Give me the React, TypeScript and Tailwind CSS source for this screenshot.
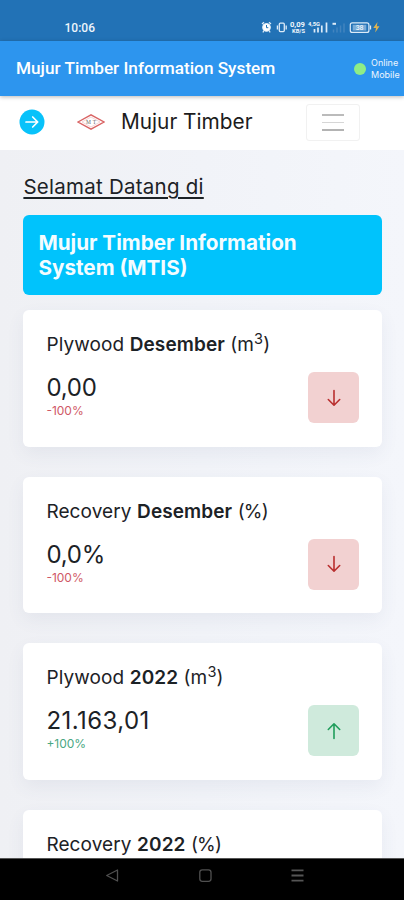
type Stat = {
  id: string;
  label: string;
  period: string;
  unit: "m3" | "%";
  value?: string;
  change?: string;
  trend: "up" | "down";
};

const stats: Stat[] = [
  { id: "plywood-month", label: "Plywood", period: "Desember", unit: "m3", value: "0,00", change: "-100%", trend: "down" },
  { id: "recovery-month", label: "Recovery", period: "Desember", unit: "%", value: "0,0%", change: "-100%", trend: "down" },
  { id: "plywood-year", label: "Plywood", period: "2022", unit: "m3", value: "21.163,01", change: "+100%", trend: "up" },
  { id: "recovery-year", label: "Recovery", period: "2022", unit: "%", trend: "up" },
];

function StatusIcons() {
  return (
    <svg
      width="122"
      height="14"
      viewBox="0 0 122 14"
      className="mt-[20px]"
      fill="none"
      stroke="#dcebf8"
    >
      {/* Alarm */}
      <circle cx="6.5" cy="7.4" r="3.9" fill="#fff" stroke="#e8f2fa" />
      <path d="M2 3.9l2-1.7M11 3.9L9 2.2M3.8 11.2l-1 1.2M9.2 11.2l1 1.2" strokeWidth="1.3" />
      <path d="M6.5 5v2.7h1.8" stroke="#2272b6" strokeWidth="1" />
      {/* Vibrate */}
      <rect x="19.3" y="3.2" width="5" height="8.4" rx="1" strokeWidth="1.3" />
      <path d="M17.4 5.4v4M26.2 5.4v4" strokeWidth="1.3" />
      {/* Network speed */}
      <g fill="#f3f8fd" stroke="none" className="font-['Roboto',sans-serif] font-bold">
        <text x="30" y="6.8" fontSize="6.5" textLength="15" lengthAdjust="spacingAndGlyphs">
          0,09
        </text>
        <text x="32" y="12.6" fontSize="5.8" textLength="13" lengthAdjust="spacingAndGlyphs">
          KB/S
        </text>
        <text x="48" y="6.2" fontSize="5" textLength="12" lengthAdjust="spacingAndGlyphs">
          4,5G
        </text>
      </g>
      {/* Signal bars */}
      <path d="M54.5 12.5V9M58 12.5V7.5M61.8 12.5V5.5M66.5 12.5V2.5" strokeWidth="1.7" />
      <path d="M72.5 3.8h3.5" strokeWidth="2" />
      <path d="M73.5 12.5V9.5M77 12.5V7.5M80.5 12.5V5.5M84 12.5V3.5" stroke="#4284bf" strokeWidth="1.5" />
      {/* Battery */}
      <rect x="90.3" y="2.8" width="18.6" height="9.6" rx="2" strokeWidth="1.2" />
      <path d="M110.5 5.5v4" strokeWidth="1.3" />
      <rect x="92.7" y="4.8" width="13.6" height="5.8" fill="#79acd8" stroke="none" />
      <text x="95.7" y="10.2" fontSize="7" fill="#fff" stroke="none" className="font-['Roboto',sans-serif]">
        38
      </text>
      <path d="M117.5 2l-4.2 6h2.7l-.8 4.5 4.3-6.2h-2.7z" fill="#e0b44f" stroke="none" />
    </svg>
  );
}

function StatusBar() {
  return (
    <div className="flex h-[41px] shrink-0 justify-between bg-[#2272b6] pr-[22px] pl-[64.5px]">
      <span className="mt-[20px] font-['Roboto',sans-serif] text-[12px] leading-4 font-medium text-[#edf5fc]">
        10:06
      </span>
      <StatusIcons />
    </div>
  );
}

function AppBar() {
  return (
    <div className="z-10 flex h-[55px] shrink-0 items-center bg-[#2d95ee] pr-[4px] pl-[16px] font-['Roboto',sans-serif] text-white shadow-[0_1px_4px_rgba(0,0,0,0.28)]">
      <span className="w-[259px] pt-[1px] text-[17.2px] font-medium whitespace-nowrap">
        Mujur Timber Information System
      </span>
      <span className="ml-auto size-[12px] rounded-full bg-[#8eed87]" />
      <div className="ml-[5px] w-[29px] font-['Inter',sans-serif] text-[9px] leading-[12px] text-[#edf6fe]">
        <div>Online</div>
        <div>Mobile</div>
      </div>
    </div>
  );
}

function Navbar() {
  return (
    <nav className="flex h-[54px] shrink-0 items-center bg-white pr-[44px] pb-[2px] pl-[19px]">
      <svg width="26" height="26" viewBox="0 0 26 26" fill="none">
        <circle cx="13" cy="13" r="12.5" fill="#08c2fa" />
        <path d="M7 13h11.5M13.7 8l5 5-5 5" stroke="#fff" strokeWidth="1.7" strokeLinecap="round" strokeLinejoin="round" />
      </svg>
      <svg width="28" height="18" viewBox="0 0 28 18" fill="none" className="ml-[32px]">
        <path d="M1 9L14 1.8 27 9 14 16.2z" stroke="#d96464" strokeWidth="1.4" />
        <path d="M5 9l9-5 9 5-9 5z" stroke="#efb9b9" strokeWidth="0.6" />
        <text x="9" y="11" fontSize="5.5" fill="#666" textLength="10" className="font-['Liberation_Serif',serif]">
          MT
        </text>
      </svg>
      <span className="ml-[16px] text-[20.8px] text-[#1c1c1c]">Mujur Timber</span>
      <button className="mt-[1px] ml-auto flex h-[37px] w-[54px] flex-col items-center justify-center gap-[6px] rounded-[3px] border border-[#f1f1f1]">
        <span className="h-[1.5px] w-[22px] bg-[#bbb]" />
        <span className="h-[1.5px] w-[22px] bg-[#d6d6d6]" />
        <span className="h-[1.5px] w-[22px] bg-[#b3b3b3]" />
      </button>
    </nav>
  );
}

function StatCard({ stat }: { stat: Stat }) {
  const isUp = stat.trend === "up";

  return (
    <div className="h-[136.6px] shrink-0 rounded-[6px] bg-white px-[23px] pt-[22px] shadow-[0_7px_18px_rgba(70,80,130,0.07)]">
      <div className="h-[26px] text-[19px] leading-[26px] tracking-[0.1px] whitespace-nowrap">
        {stat.label} <span className="font-semibold">{stat.period}</span>{" "}
        {stat.unit === "m3" ? (
          <>
            (m<sup className="text-[14.5px] leading-none">3</sup>)
          </>
        ) : (
          <span className="tracking-[-0.8px]">(%)</span>
        )}
      </div>
      {stat.value && (
        <div className="mt-[14px] flex justify-between">
          <div>
            <div
              className={`text-[24px] leading-[31px] ${isUp ? "tracking-[0.45px]" : "tracking-[-0.2px]"}`}
            >
              {stat.value}
            </div>
            <div
              className={`text-[12px] leading-[16px] ${isUp ? "text-[#4aa783]" : "text-[#cf5866]"}`}
            >
              {stat.change}
            </div>
          </div>
          <div
            className={`flex size-[51px] items-center justify-center rounded-[6px] ${
              isUp ? "bg-[#cfeadc] text-[#1f9d5b]" : "bg-[#f2d1d1] text-[#b92f2f]"
            }`}
          >
            <svg
              width="16"
              height="18"
              viewBox="0 0 16 18"
              fill="none"
              stroke="currentColor"
              strokeWidth="1.6"
              strokeLinecap="round"
              strokeLinejoin="round"
            >
              {isUp ? (
                <path d="M8 16.5V2M2.3 7.5L8 1.8l5.7 5.7" />
              ) : (
                <path d="M8 1.5V16M2.3 10.5L8 16.2l5.7-5.7" />
              )}
            </svg>
          </div>
        </div>
      )}
    </div>
  );
}

function SystemNav() {
  return (
    <div className="flex h-[42px] shrink-0 justify-between border-t border-[#555] bg-black pt-[9px] pr-[99px] pl-[105px]">
      <svg width="15" height="15" viewBox="0 0 15 15" fill="none" stroke="#505050" strokeWidth="1.3">
        <path d="M12.5 2v11L1.7 7.5z" strokeLinejoin="round" />
      </svg>
      <svg width="15" height="15" viewBox="0 0 15 15" fill="none" stroke="#505050" strokeWidth="1.3">
        <rect x="1.8" y="1.8" width="11.2" height="11.5" rx="2.5" />
      </svg>
      <svg width="15" height="15" viewBox="0 0 15 15" fill="none" stroke="#555" strokeWidth="1.8">
        <path d="M1.5 2.3h12M1.5 7.5h12M1.5 12.7h12" />
      </svg>
    </div>
  );
}

export default function App() {
  return (
    <div className="flex h-[900px] w-[404px] flex-col overflow-hidden bg-[#f2f4f9] font-['Inter',sans-serif] text-[#1c2226]">
      <StatusBar />
      <AppBar />
      <Navbar />

      <main className="flex min-h-0 flex-1 flex-col overflow-hidden bg-linear-to-r from-[#eff0f4] via-[#f1f3f8] to-[#f4f6fb] pr-[21.6px] pl-[23.4px]">
        <h2 className="mt-[23px] h-[28px] text-[20.5px] leading-[28px] tracking-[0.25px] underline decoration-[1.5px] underline-offset-[3px]">
          Selamat Datang di
        </h2>

        <div className="mt-[14px] h-[80px] shrink-0 rounded-[6px] bg-[#00c3fc] px-[15px] pt-[15px] text-[20.7px] leading-[25px] font-bold text-[#f4fcff]">
          Mujur Timber Information System (MTIS)
        </div>

        {/* Production stats */}
        <div className="mt-[15.2px] flex flex-col gap-[30px]">
          {stats.map((stat) => (
            <StatCard key={stat.id} stat={stat} />
          ))}
        </div>
      </main>

      <SystemNav />
    </div>
  );
}
